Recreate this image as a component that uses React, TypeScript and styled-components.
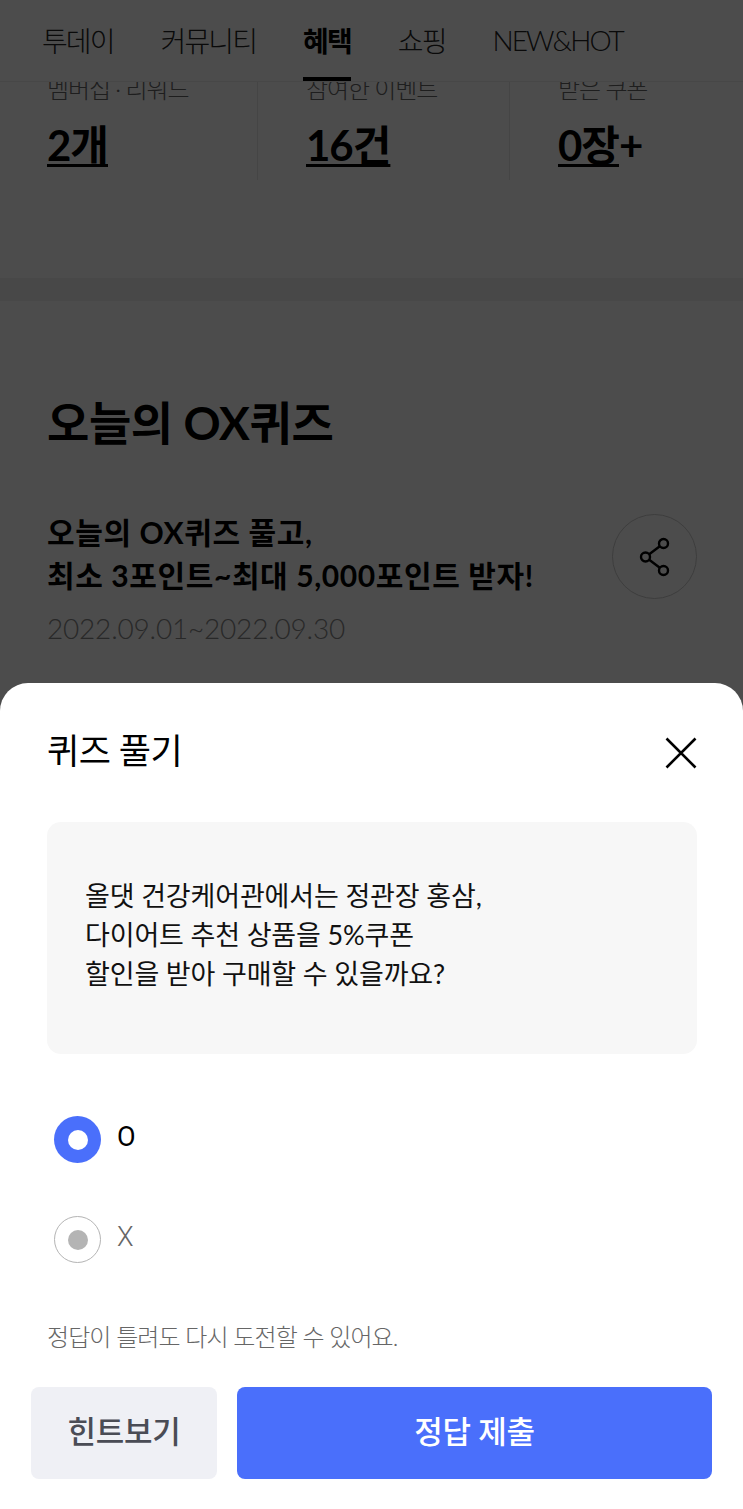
import React from 'react';
import styled, { createGlobalStyle } from 'styled-components';

const GlobalStyle = createGlobalStyle`
  html, body {
    margin : 0;
    padding : 0;
    background : #fff;
  }
  body {
    font-family : Lato, "Noto Sans CJK KR", "Noto Sans", sans-serif;
    color : #000;
  }
`

const Page = styled.div`
  position : relative;
  width : 743px;
  height : 1509px;
  overflow : hidden;
  background : #fff;
`

const Header = styled.nav`
  display : flex;
  align-items : flex-start;
  gap : 47px;
  height : 82px;
  padding-left : 42px;
  box-sizing : border-box;
  border-bottom : 1px solid #eee;
`

const Tab = styled.div<{ $active?: boolean }>`
  position : relative;
  display : flex;
  align-items : center;
  height : 81px;
  padding-bottom : 1px;
  box-sizing : border-box;
  font-size : 28px;
  letter-spacing : -1.9px;
  font-weight : ${(p) => (p.$active ? 700 : 300)};
  color : ${(p) => (p.$active ? '#000' : '#222')};
  white-space : nowrap;

  ${(p) => p.$active && `
    &::after {
      content : '';
      position : absolute;
      left : 0;
      right : 0;
      bottom : 0;
      height : 4px;
      background : #000;
    }
  `}
`

const StatsClip = styled.section`
  height : 196px;
  overflow : hidden;
  border-bottom : 23px solid #f0f0f0;
`

const Stats = styled.div`
  display : grid;
  grid-template-columns : 258px 252px 1fr;
  height : 98px;
`

const Stat = styled.div<{ $first?: boolean }>`
  margin-top : -13px;
  padding-left : ${(p) => (p.$first ? '47px' : '48px')};
  border-right : 1px solid #e8e8e8;
  box-sizing : border-box;

  &:last-child {
    border-right : 0;
  }
`

const StatLabel = styled.div`
  height : 40px;
  font-size : 24px;
  line-height : 40px;
  letter-spacing : -1.1px;
  font-weight : 300;
  color : #666;
  white-space : nowrap;
`

const StatValue = styled.div`
  margin-top : 8px;
  font-size : 42px;
  line-height : 56px;
  font-weight : 700;
  letter-spacing : -1px;
  white-space : nowrap;

  u {
    text-decoration-thickness : 3px;
    text-underline-offset : 3px;
  }
`

const Quiz = styled.section`
  padding : 90px 46px 0 47px;
`

const QuizTitle = styled.h1`
  margin : 0;
  font-size : 46px;
  line-height : 64px;
  font-weight : 700;
  letter-spacing : -0.4px;
`

const QuizInfo = styled.div`
  display : flex;
  justify-content : space-between;
  align-items : flex-start;
  margin-top : 56px;
`

const QuizSub = styled.div`
  font-size : 30px;
  line-height : 43px;
  font-weight : 700;
  letter-spacing : 0.6px;
  white-space : nowrap;
`

const QuizDate = styled.div`
  margin-top : 9px;
  font-size : 28px;
  line-height : 44px;
  font-weight : 300;
  letter-spacing : -0.2px;
  color : #888;
`

const ShareButton = styled.div`
  display : flex;
  align-items : center;
  justify-content : center;
  width : 85px;
  height : 85px;
  margin-top : 3px;
  border : 1px solid #ccc;
  border-radius : 50%;
  box-sizing : border-box;
`

const Scrim = styled.div`
  position : absolute;
  inset : 0;
  background : rgba(0, 0, 0, 0.7);
`

const Sheet = styled.div`
  position : absolute;
  left : 0;
  right : 0;
  bottom : 0;
  height : 826px;
  padding : 0 31px;
  box-sizing : border-box;
  background : #fff;
  border-radius : 28px 28px 0 0;
`

const SheetHead = styled.div`
  display : flex;
  justify-content : space-between;
  align-items : center;
  height : 139px;
  padding : 0 15px 0 16px;
  box-sizing : border-box;
`

const SheetTitle = styled.h2`
  margin : 0 0 6px;
  font-size : 35px;
  line-height : 48px;
  font-weight : 400;
  letter-spacing : -0.5px;
`

const QuestionBox = styled.div`
  display : flex;
  align-items : center;
  height : 232px;
  margin : 0 15px 0 16px;
  padding : 0 39px 8px 38px;
  box-sizing : border-box;
  background : #f7f7f7;
  border-radius : 14px;
  font-size : 27px;
  line-height : 39px;
  font-weight : 400;
  letter-spacing : -0.15px;
  color : #111;
`

const Options = styled.div`
  display : flex;
  flex-direction : column;
  gap : 53px;
  margin-top : 62px;
  padding-left : 23px;
`

const Option = styled.div`
  display : flex;
  align-items : center;
  gap : 16px;
  height : 47px;
`

const Radio = styled.span<{ $checked?: boolean }>`
  display : flex;
  align-items : center;
  justify-content : center;
  width : 47px;
  height : 47px;
  box-sizing : border-box;
  border-radius : 50%;
  background : ${(p) => (p.$checked ? '#4a6ffb' : '#fff')};
  border : ${(p) => (p.$checked ? '0' : '1.5px solid #b4b4b4')};

  &::after {
    content : '';
    width : 20px;
    height : 20px;
    border-radius : 50%;
    background : ${(p) => (p.$checked ? '#fff' : '#b4b4b4')};
  }
`

const OptionText = styled.span<{ $checked?: boolean }>`
  margin-bottom : 5px;
  font-family : Roboto, sans-serif;
  font-size : 27px;
  line-height : 36px;
  font-weight : ${(p) => (p.$checked ? 400 : 300)};
  color : ${(p) => (p.$checked ? '#000' : '#666')};
`

const Note = styled.p`
  margin : 56px 0 0 16px;
  font-size : 24px;
  line-height : 36px;
  font-weight : 300;
  letter-spacing : -0.9px;
  color : #666;
`

const Buttons = styled.div`
  display : grid;
  grid-template-columns : 186px 475px;
  gap : 20px;
  margin-top : 32px;
`

const Button = styled.div<{ $primary?: boolean }>`
  display : flex;
  align-items : center;
  justify-content : center;
  height : 92px;
  padding-bottom : 7px;
  box-sizing : border-box;
  border-radius : 8px;
  font-size : 31px;
  font-weight : 500;
  letter-spacing : -0.3px;
  background : ${(p) => (p.$primary ? '#4a6ffb' : '#eff0f5')};
  color : ${(p) => (p.$primary ? '#fff' : '#4a4c55')};
`

const ShareIcon = () => (
  <svg width="32" height="40" viewBox="0 0 32 40" fill="none" stroke="#000" strokeWidth="2.4">
    <circle cx="24.5" cy="6.5" r="4.5" />
    <circle cx="6.5" cy="20" r="4.5" />
    <circle cx="24.5" cy="33.5" r="4.5" />
    <path d="M20.8 9.3 10.2 17.2M10.2 22.8l10.6 7.9" />
  </svg>
)

const CloseIcon = () => (
  <svg width="32" height="32" viewBox="0 0 32 32" fill="none" stroke="#000" strokeWidth="2.6">
    <path d="M1.5 1.5 30.5 30.5M30.5 1.5 1.5 30.5" />
  </svg>
)

const tabs = ['투데이', '커뮤니티', '혜택', '쇼핑', 'NEW&HOT']

const App = () => {
  return (
    <Page>
      <GlobalStyle />
      <Header>
        {tabs.map((tab) => (
          <Tab key={tab} $active={tab === '혜택'}>{tab}</Tab>
        ))}
      </Header>
      <StatsClip>
        <Stats>
          <Stat $first>
            <StatLabel>멤버십 · 리워드</StatLabel>
            <StatValue><u>2개</u></StatValue>
          </Stat>
          <Stat>
            <StatLabel>참여한 이벤트</StatLabel>
            <StatValue><u>16건</u></StatValue>
          </Stat>
          <Stat>
            <StatLabel>받은 쿠폰</StatLabel>
            <StatValue><u>0장</u>+</StatValue>
          </Stat>
        </Stats>
      </StatsClip>
      <Quiz>
        <QuizTitle>오늘의 OX퀴즈</QuizTitle>
        <QuizInfo>
          <div>
            <QuizSub>오늘의 OX퀴즈 풀고,<br />최소 3포인트~최대 5,000포인트 받자!</QuizSub>
            <QuizDate>2022.09.01~2022.09.30</QuizDate>
          </div>
          <ShareButton><ShareIcon /></ShareButton>
        </QuizInfo>
      </Quiz>
      <Scrim />
      <Sheet>
        <SheetHead>
          <SheetTitle>퀴즈 풀기</SheetTitle>
          <CloseIcon />
        </SheetHead>
        <QuestionBox>
          <div>
            올댓 건강케어관에서는 정관장 홍삼,<br />
            다이어트 추천 상품을 5%쿠폰<br />
            할인을 받아 구매할 수 있을까요?
          </div>
        </QuestionBox>
        <Options>
          <Option>
            <Radio $checked />
            <OptionText $checked>O</OptionText>
          </Option>
          <Option>
            <Radio />
            <OptionText>X</OptionText>
          </Option>
        </Options>
        <Note>정답이 틀려도 다시 도전할 수 있어요.</Note>
        <Buttons>
          <Button>힌트보기</Button>
          <Button $primary>정답 제출</Button>
        </Buttons>
      </Sheet>
    </Page>
  )
}

export default App
